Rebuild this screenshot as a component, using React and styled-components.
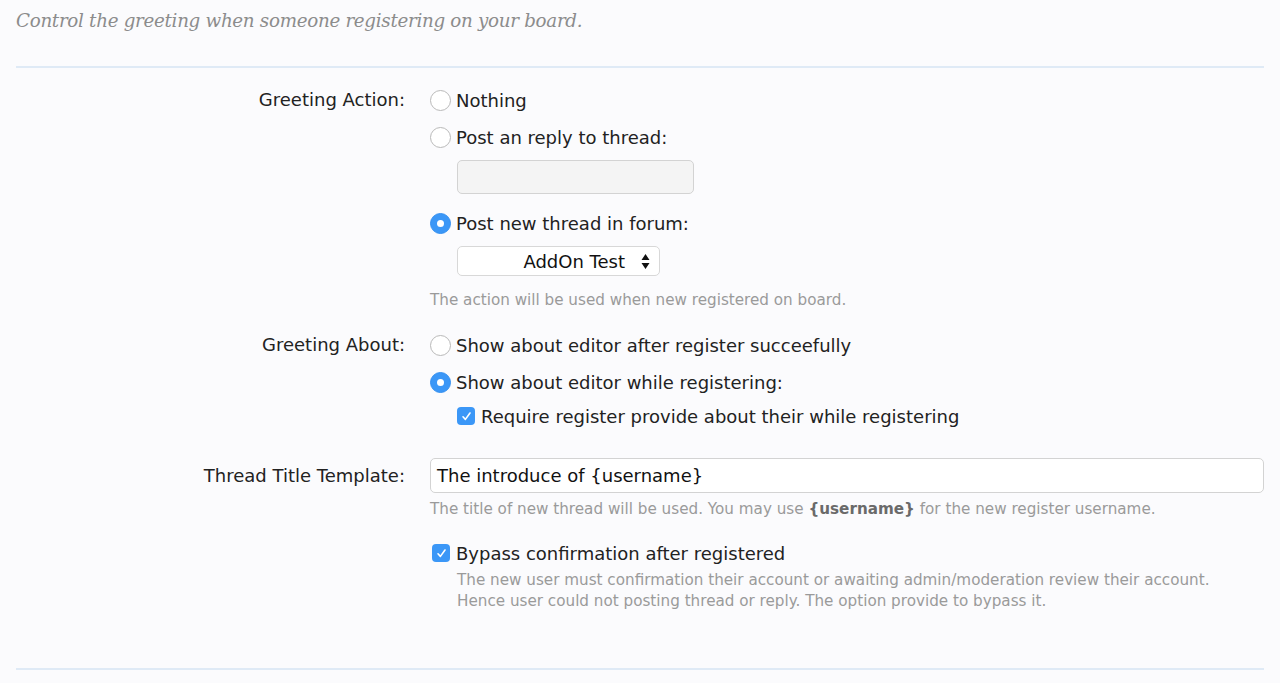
import React from "react";
import styled, { createGlobalStyle } from "styled-components";

const Global = createGlobalStyle`
  html, body {
    margin: 0;
    padding: 0;
    background: #fbfbfd;
  }
  body {
    font-family: "DejaVu Sans", Verdana, sans-serif;
    color: #222;
  }
`;

const Page = styled.div`
  padding: 0 16px;
  height: 683px;
  overflow: hidden;
`;

const Intro = styled.p`
  margin: 0;
  height: 68px;
  line-height: 42px;
  box-sizing: border-box;
  font-family: "DejaVu Serif", Georgia, serif;
  font-style: italic;
  font-size: 18.3px;
  letter-spacing: -0.3px;
  color: #8c8c8c;
  border-bottom: 2px solid #dfeaf6;
`;

const Form = styled.div`
  padding-top: 20px;
  height: 602px;
  box-sizing: border-box;
  border-bottom: 2px solid #dfeaf6;
`;

const Row = styled.div`
  display: grid;
  grid-template-columns: 389px 1fr;
  column-gap: 25px;
  margin-bottom: ${(p) => p.gap || 0}px;
`;

const Label = styled.div`
  text-align: right;
  font-size: 18px;
  line-height: 24px;
  padding-top: ${(p) => p.top || 0}px;
  color: #222;
`;

const Controls = styled.div`
  display: flex;
  flex-direction: column;
`;

const Option = styled.label`
  display: flex;
  align-items: center;
  gap: 5px;
  font-size: 18px;
  height: 24px;
  margin-left: ${(p) => p.indent || 0}px;
  margin-top: ${(p) => p.before || 0}px;
  margin-bottom: ${(p) => p.after || 0}px;
  color: #222;
`;

const Radio = styled.span`
  width: 21px;
  height: 21px;
  border-radius: 50%;
  box-sizing: border-box;
  flex: none;
  display: flex;
  align-items: center;
  justify-content: center;
  ${(p) =>
    p.checked
      ? `background: #3b97f7; border: 1px solid #3590f0;`
      : `background: #fff; border: 1px solid #b9b9b9;`}
  &::after {
    content: "";
    display: ${(p) => (p.checked ? "block" : "none")};
    width: 7px;
    height: 7px;
    border-radius: 50%;
    background: #fff;
  }
`;

const Check = styled.span`
  width: 18px;
  height: 18px;
  border-radius: 4px;
  background: #3b97f7;
  flex: none;
  display: flex;
  align-items: center;
  justify-content: center;
  margin-left: ${(p) => p.shift || 0}px;
  margin-right: 1px;
`;

const Sub = styled.div`
  margin-left: 27px;
  margin-top: ${(p) => p.before || 0}px;
`;

const TextBox = styled.div`
  width: ${(p) => p.w};
  height: ${(p) => p.h || 34}px;
  box-sizing: border-box;
  border: 1px solid #d3d3d3;
  border-radius: 5px;
  background: ${(p) => p.bg || "#fff"};
  font-size: 18px;
  display: flex;
  align-items: center;
  padding-left: 6px;
  color: #111;
`;

const Select = styled.div`
  width: 203px;
  height: 30px;
  box-sizing: border-box;
  border: 1px solid #d8d8d8;
  border-radius: 5px;
  background: #fff;
  display: flex;
  align-items: center;
  justify-content: flex-end;
  padding-right: 9px;
  gap: 16px;
  font-size: 18px;
  color: #111;
`;

const Explain = styled.div`
  font-size: 15.2px;
  line-height: 21px;
  color: #9a9a9a;
  margin-left: ${(p) => p.indent || 0}px;
  margin-top: ${(p) => p.before || 0}px;
  & b {
    color: #6a6a6a;
  }
`;

const Arrows = () => (
  <svg width="9" height="17" viewBox="0 0 9 17">
    <path d="M4.5 1 L8.5 7 L0.5 7 Z M4.5 16 L8.5 10 L0.5 10 Z" fill="#111" />
  </svg>
);

const Tick = () => (
  <svg width="11" height="11" viewBox="0 0 11 11">
    <path d="M2 5.8 L4.4 8.4 L9 2" stroke="#fff" strokeWidth="1.6" fill="none" strokeLinecap="round" strokeLinejoin="round" />
  </svg>
);

export default function App() {
  return (
    <>
      <Global />
      <Page>
        <Intro>Control the greeting when someone registering on your board.</Intro>
        <Form>
          <Row gap={22}>
            <Label>Greeting Action:</Label>
            <Controls>
              <Option after={13}>
                <Radio />
                Nothing
              </Option>
              <Option>
                <Radio />
                Post an reply to thread:
              </Option>
              <Sub before={11}>
                <TextBox w="237px" bg="#f4f4f4" />
              </Sub>
              <Option before={17}>
                <Radio checked />
                Post new thread in forum:
              </Option>
              <Sub before={11}>
                <Select>
                  AddOn Test
                  <Arrows />
                </Select>
              </Sub>
              <Explain before={14}>The action will be used when new registered on board.</Explain>
            </Controls>
          </Row>
          <Row gap={30}>
            <Label>Greeting About:</Label>
            <Controls>
              <Option after={13}>
                <Radio />
                Show about editor after register succeefully
              </Option>
              <Option after={10}>
                <Radio checked />
                Show about editor while registering:
              </Option>
              <Option indent={27}>
                <Check>
                  <Tick />
                </Check>
                Require register provide about their while registering
              </Option>
            </Controls>
          </Row>
          <Row>
            <Label top={6}>Thread Title Template:</Label>
            <Controls>
              <TextBox w="834px" h={35}>
                The introduce of {"{username}"}
              </TextBox>
              <Explain before={6}>
                The title of new thread will be used. You may use <b>{"{username}"}</b> for the new register
                username.
              </Explain>
              <Option before={21} after={5}>
                <Check shift={2}>
                  <Tick />
                </Check>
                Bypass confirmation after registered
              </Option>
              <Explain indent={27}>
                The new user must confirmation their account or awaiting admin/moderation review their account.
                <br />
                Hence user could not posting thread or reply. The option provide to bypass it.
              </Explain>
            </Controls>
          </Row>
        </Form>
      </Page>
    </>
  );
}
